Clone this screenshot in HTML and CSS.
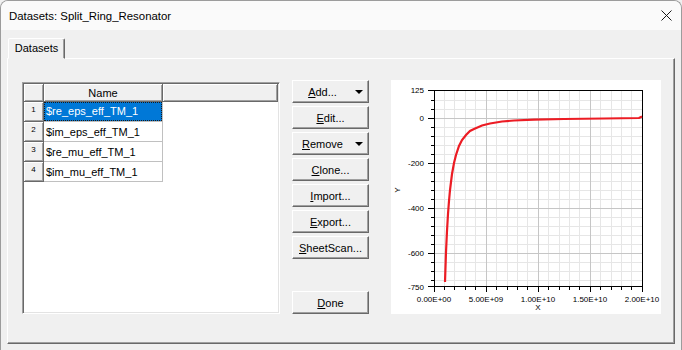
FILE: index.html
```html
<!DOCTYPE html>
<html lang="en">
<head>
    <meta charset="UTF-8">
    <title>Datasets: Split_Ring_Resonator</title>
    <link rel="stylesheet" href="styles.css">
</head>
<body>
    <div class="window">
        <div class="titlebar">
            <span class="title">Datasets: Split_Ring_Resonator</span>
            <svg class="close" width="11" height="11" viewBox="0 0 11 11">
                <path d="M0.5 0.5L10.5 10.5M10.5 0.5L0.5 10.5" stroke="#1a1a1a" stroke-width="1" fill="none"/>
            </svg>
        </div>
        <div class="client">
            <div class="tabs">
                <div class="tab">Datasets</div>
            </div>
            <div class="panel">
                <!-- dataset list -->
                <div class="grid">
                    <table class="sheet">
                        <colgroup>
                            <col class="c-num">
                            <col class="c-name">
                            <col class="c-rest">
                        </colgroup>
                        <thead>
                            <tr>
                                <th></th>
                                <th>Name</th>
                                <th></th>
                            </tr>
                        </thead>
                        <tbody>
                            <tr>
                                <td class="num">1</td>
                                <td class="name sel"><span class="focus">$re_eps_eff_TM_1</span></td>
                                <td></td>
                            </tr>
                            <tr>
                                <td class="num">2</td>
                                <td class="name">$im_eps_eff_TM_1</td>
                                <td></td>
                            </tr>
                            <tr>
                                <td class="num">3</td>
                                <td class="name">$re_mu_eff_TM_1</td>
                                <td></td>
                            </tr>
                            <tr>
                                <td class="num">4</td>
                                <td class="name">$im_mu_eff_TM_1</td>
                                <td></td>
                            </tr>
                        </tbody>
                    </table>
                </div>

                <!-- buttons -->
                <div class="actions">
                    <button class="btn menu"><span class="label"><u>A</u>dd...</span><span class="arrow"></span></button>
                    <button class="btn"><u>E</u>dit...</button>
                    <button class="btn menu"><span class="label"><u>R</u>emove</span><span class="arrow"></span></button>
                    <button class="btn"><u>C</u>lone...</button>
                    <button class="btn"><u>I</u>mport...</button>
                    <button class="btn"><u>E</u>xport...</button>
                    <button class="btn"><u>S</u>heetScan...</button>
                    <button class="btn done"><u>D</u>one</button>
                </div>

                <!-- preview plot -->
                <div class="chart">
                    <svg width="270" height="234" viewBox="0 0 270 234">
                        <g fill="none" stroke-width="1">
                            <path stroke="#e6e6e6" d="M53.5 10V207M63.5 10V207M74.5 10V207M84.5 10V207M105.5 10V207M116.5 10V207M126.5 10V207M136.5 10V207M157.5 10V207M168.5 10V207M178.5 10V207M188.5 10V207M209.5 10V207M220.5 10V207M230.5 10V207M240.5 10V207"/>
                            <path stroke="#e6e6e6" d="M43 20.5H251M43 29.5H251M43 47.5H251M43 56.5H251M43 65.5H251M43 74.5H251M43 92.5H251M43 101.5H251M43 110.5H251M43 119.5H251M43 137.5H251M43 146.5H251M43 155.5H251M43 164.5H251M43 182.5H251M43 191.5H251M43 200.5H251"/>
                            <path stroke="#c6c6c6" d="M95.5 10V207M147.5 10V207M199.5 10V207M43 38.5H251M43 83.5H251M43 128.5H251M43 173.5H251"/>
                            <rect x="43.5" y="10.5" width="208" height="196" stroke="#000"/>
                            <path stroke="#000" d="M37 10.5H43M37 38.5H43M37 83.5H43M37 128.5H43M37 173.5H43M37 206.5H43M40 20.5H43M40 29.5H43M40 47.5H43M40 56.5H43M40 65.5H43M40 74.5H43M40 92.5H43M40 101.5H43M40 110.5H43M40 119.5H43M40 137.5H43M40 146.5H43M40 155.5H43M40 164.5H43M40 182.5H43M40 191.5H43M40 200.5H43"/>
                            <path stroke="#000" d="M43.5 207V212M95.5 207V212M147.5 207V212M199.5 207V212M251.5 207V212M53.5 207V210M63.5 207V210M74.5 207V210M84.5 207V210M105.5 207V210M116.5 207V210M126.5 207V210M136.5 207V210M157.5 207V210M168.5 207V210M178.5 207V210M188.5 207V210M209.5 207V210M220.5 207V210M230.5 207V210M240.5 207V210"/>
                            <polyline stroke="#ec1c24" stroke-width="2.2" points="54,202 55,172 56,151 57,134 58,121 59,110 61,94 63,83 65,75 68,66 71,60 75,55 79,51 83,49 91,45.5 99,43.5 111,41.5 123,40.5 143,39.7 173,39 213,38.5 248,38 251,36.5"/>
                        </g>
                        <g class="ticks" text-anchor="end">
                            <text x="33" y="13">125</text>
                            <text x="33" y="41">0</text>
                            <text x="33" y="86">-200</text>
                            <text x="33" y="131">-400</text>
                            <text x="33" y="176">-600</text>
                            <text x="33" y="210">-750</text>
                        </g>
                        <g class="ticks" text-anchor="middle">
                            <text x="43" y="222">0.00E+00</text>
                            <text x="95" y="222">5.00E+09</text>
                            <text x="147" y="222">1.00E+10</text>
                            <text x="199" y="222">1.50E+10</text>
                            <text x="251" y="222">2.00E+10</text>
                            <text x="147" y="230">X</text>
                            <text transform="translate(9 110) rotate(-90)">Y</text>
                        </g>
                    </svg>
                </div>
            </div>
        </div>
    </div>
</body>
</html>
```

FILE: styles.css
```css
body {
    margin: 0;
    font-family: "Liberation Sans", Arial, sans-serif;
    font-size: 11px;
    color: #000;
    background: #f0f0f0;
}
.window {
    width: 682px;
    height: 350px;
    box-sizing: border-box;
    border: 1px solid #9c9c9c;
    border-bottom: none;
    border-radius: 8px 8px 0 0;
    background: #f0f0f0;
    overflow: hidden;
}
.titlebar {
    height: 29px;
    background: #fafafa;
    display: flex;
    align-items: center;
    justify-content: space-between;
    padding: 0 9px 0 8px;
}
.title {
    font-size: 11.4px;
}
.client {
    padding: 8px 6px 0 6px;
}
.tabs {
    display: flex;
    height: 20px;
}
.tab {
    position: relative;
    z-index: 1;
    margin-left: 1px;
    width: 57px;
    height: 21px;
    box-sizing: border-box;
    border: 1px solid;
    border-color: #fff #696969 transparent #fff;
    border-radius: 2px 2px 0 0;
    box-shadow: inset -1px 0 #a0a0a0;
    background: #f0f0f0;
    text-align: center;
    line-height: 18px;
}
.panel {
    width: 668px;
    height: 286px;
    box-sizing: border-box;
    border: 1px solid;
    border-color: #fff #696969 #696969 #fff;
    box-shadow: inset -1px -1px #a0a0a0;
    display: flex;
    align-items: flex-start;
    padding: 21px 0 0 14px;
}

/* grid */
.grid {
    margin-top: 2px;
    width: 258px;
    height: 232px;
    box-sizing: border-box;
    border: 1px solid;
    border-color: #a0a0a0 #fff #fff #a0a0a0;
    box-shadow: inset 1px 1px #696969, inset -1px -1px #e3e3e3;
    background: #fff;
    padding: 1px;
}
.sheet {
    border-collapse: separate;
    border-spacing: 0;
    table-layout: fixed;
    width: 254px;
}
.c-num {
    width: 20px;
}
.c-name {
    width: 119px;
}
.sheet th {
    height: 18px;
    box-sizing: border-box;
    padding: 0;
    font-weight: normal;
    background: #f0f0f0;
    border-right: 1px solid #696969;
    border-bottom: 1px solid #696969;
    box-shadow: inset 1px 1px #fff, inset -1px -1px #a0a0a0;
}
.sheet td {
    height: 20px;
    box-sizing: border-box;
    padding: 0;
    white-space: nowrap;
}
.sheet td.num {
    background: #f0f0f0;
    border-right: 1px solid #696969;
    border-bottom: 1px solid #696969;
    box-shadow: inset 1px 1px #fff, inset -1px -1px #a0a0a0;
    font-size: 8px;
    text-align: center;
    vertical-align: top;
    padding-top: 3px;
}
.sheet td.name {
    border-right: 1px solid #c0c0c0;
    border-bottom: 1px solid #c0c0c0;
    padding-left: 2px;
}
.sheet td.sel {
    background: #0078d7;
    color: #fff;
    padding: 0;
}
.focus {
    display: block;
    height: 19px;
    box-sizing: border-box;
    border: 1px dotted #1a1a1a;
    padding-left: 1px;
    line-height: 17px;
}

/* buttons */
.actions {
    margin-left: 12px;
    width: 77px;
    display: flex;
    flex-direction: column;
    gap: 3px;
}
.btn {
    height: 23px;
    box-sizing: border-box;
    border: 1px solid;
    border-color: #fff #696969 #696969 #fff;
    box-shadow: inset -1px -1px #a0a0a0;
    background: #f0f0f0;
    font-family: inherit;
    font-size: 11px;
    color: #000;
    padding: 0;
    display: flex;
    align-items: center;
    justify-content: center;
}
.btn.menu {
    justify-content: flex-start;
}
.btn .label {
    flex: 1;
    text-align: center;
}
.arrow {
    margin: 0 5px 0 3px;
    width: 0;
    height: 0;
    border-left: 4px solid transparent;
    border-right: 4px solid transparent;
    border-top: 4px solid #000;
}
.btn.done {
    margin-top: 29px;
}

/* plot */
.chart {
    margin-left: 22px;
    width: 270px;
    height: 234px;
    background: #fff;
}
.chart svg {
    display: block;
}
.ticks text {
    font-family: "Liberation Sans", Arial, sans-serif;
    font-size: 8px;
    fill: #000;
}
```
